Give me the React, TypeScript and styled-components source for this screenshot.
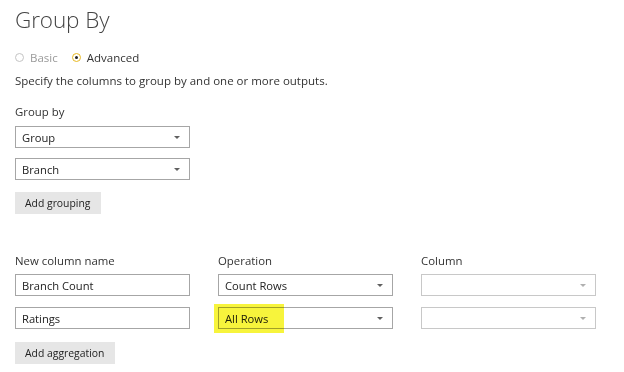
import React from "react";
import styled, { createGlobalStyle } from "styled-components";

const Global = createGlobalStyle`
  html, body { margin: 0; padding: 0; background: #ffffff; }
  body { font-family: "Open Sans", "Noto Sans", sans-serif; color: #333333; }
  * { box-sizing: border-box; }
`;

const Page = styled.div`
  width: 624px;
  height: 372px;
  padding: 0 15px;
  display: flex;
  flex-direction: column;
  overflow: hidden;
`;

const Title = styled.h1`
  margin: 0;
  height: 40px;
  line-height: 40px;
  font-size: 22.5px;
  font-weight: 300;
  color: #444444;
  letter-spacing: -0.1px;
`;

const RadioRow = styled.div`
  margin-top: 7px;
  height: 20px;
  display: flex;
  align-items: center;
  gap: 14px;
  font-size: 11.5px;
`;

const RadioItem = styled.label<{ $checked?: boolean }>`
  display: flex;
  align-items: center;
  gap: 6px;
  color: ${(p) => (p.$checked ? "#333333" : "#9a9a9a")};
`;

const RadioCircle = styled.span<{ $checked?: boolean }>`
  width: 9px;
  height: 9px;
  border-radius: 50%;
  border: ${(p) => (p.$checked ? "1.5px solid #e8b923" : "1px solid #c4c4c4")};
  display: flex;
  align-items: center;
  justify-content: center;
  &::after {
    content: "";
    width: 3px;
    height: 3px;
    border-radius: 50%;
    background: ${(p) => (p.$checked ? "#222222" : "transparent")};
  }
`;

const Description = styled.div`
  margin-top: 4px;
  height: 20px;
  line-height: 20px;
  font-size: 11.5px;
  color: #333333;
`;

const Label = styled.div<{ $top?: number }>`
  margin-top: ${(p) => p.$top ?? 0}px;
  height: 20px;
  line-height: 20px;
  font-size: 11.4px;
  color: #333333;
`;

const Field = styled.div<{ $disabled?: boolean; $top?: number }>`
  position: relative;
  margin-top: ${(p) => p.$top ?? 0}px;
  width: 175px;
  height: 22px;
  border: 1px solid ${(p) => (p.$disabled ? "#c8c8c8" : "#a6a6a6")};
  background: #ffffff;
  display: flex;
  align-items: center;
  justify-content: space-between;
  padding: 0 9px 0 6px;
  font-size: 11.2px;
  color: #222222;
`;

const Arrow = styled.span<{ $disabled?: boolean }>`
  width: 0;
  height: 0;
  border-left: 3px solid transparent;
  border-right: 3px solid transparent;
  border-top: 3px solid ${(p) => (p.$disabled ? "#b0b0b0" : "#606060")};
`;

const Button = styled.button<{ $top?: number }>`
  margin-top: ${(p) => p.$top ?? 0}px;
  align-self: flex-start;
  height: 22px;
  padding: 0 10px;
  border: none;
  background: #e6e6e6;
  font-family: inherit;
  font-size: 10.4px;
  color: #222222;
`;

const Grid = styled.div<{ $top?: number }>`
  margin-top: ${(p) => p.$top ?? 0}px;
  display: grid;
  grid-template-columns: 175px 175px 175px;
  column-gap: 28px;
`;

const Cell = styled.div`
  display: flex;
  flex-direction: column;
`;

const Highlight = styled.span`
  position: absolute;
  left: -5px;
  top: -4px;
  width: 70px;
  height: 29px;
  background: #f7f43c;
  mix-blend-mode: multiply;
  pointer-events: none;
`;

const Select = ({
  value,
  disabled,
  top,
  highlight,
}: {
  value?: string;
  disabled?: boolean;
  top?: number;
  highlight?: boolean;
}) => (
  <Field $disabled={disabled} $top={top}>
    <span>{value}</span>
    <Arrow $disabled={disabled} />
    {highlight && <Highlight />}
  </Field>
);

const TextField = ({ value, top }: { value: string; top?: number }) => (
  <Field $top={top}>
    <span>{value}</span>
  </Field>
);

export default function App() {
  return (
    <>
      <Global />
      <Page>
        <Title>Group By</Title>
        <RadioRow>
          <RadioItem>
            <RadioCircle />
            Basic
          </RadioItem>
          <RadioItem $checked>
            <RadioCircle $checked />
            Advanced
          </RadioItem>
        </RadioRow>
        <Description>Specify the columns to group by and one or more outputs.</Description>
        <Label $top={11}>Group by</Label>
        <Select value="Group" top={4} />
        <Select value="Branch" top={10} />
        <Button $top={12}>Add grouping</Button>
        <Grid $top={37}>
          <Cell>
            <Label>New column name</Label>
            <TextField value="Branch Count" top={3} />
            <TextField value="Ratings" top={11} />
          </Cell>
          <Cell>
            <Label>Operation</Label>
            <Select value="Count Rows" top={3} />
            <Select value="All Rows" top={11} highlight />
          </Cell>
          <Cell>
            <Label>Column</Label>
            <Select disabled top={3} />
            <Select disabled top={11} />
          </Cell>
        </Grid>
        <Button $top={13}>Add aggregation</Button>
      </Page>
    </>
  );
}
